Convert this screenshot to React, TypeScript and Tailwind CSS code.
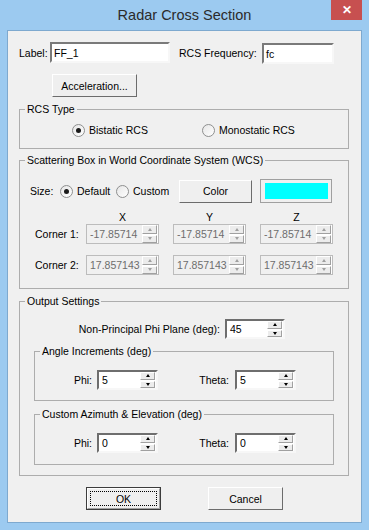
import React from "react";

const font = { fontFamily: '"Liberation Sans", Arial, sans-serif' };

function Arrow({ up, disabled }: { up: boolean; disabled?: boolean }) {
  const color = disabled ? "border-b-[#a0a0a0]" : "border-b-black";
  const colorDown = disabled ? "border-t-[#a0a0a0]" : "border-t-black";
  return up ? (
    <span className={`h-0 w-0 border-x-[2.5px] border-x-transparent border-b-[3px] ${color}`} />
  ) : (
    <span className={`h-0 w-0 border-x-[2.5px] border-x-transparent border-t-[3px] ${colorDown}`} />
  );
}

function Spin({
  value,
  width,
  disabled,
}: {
  value: string;
  width: string;
  disabled?: boolean;
}) {
  return (
    <div
      className={[
        "flex h-[20px] shrink-0",
        width,
        disabled
          ? "border border-[#bcbcbc] bg-[#f0f0f0]"
          : "border-2 border-t-[#6e6e6e] border-l-[#6e6e6e] border-b-[#f7f7f7] border-r-[#f7f7f7] bg-white",
      ].join(" ")}
    >
      <div
        className={[
          "flex min-w-0 flex-1 items-center overflow-hidden whitespace-nowrap",
          disabled ? "pl-[3px] text-[#6d6d6d]" : "pl-[3px] text-black",
        ].join(" ")}
      >
        {value}
      </div>
      <div className="flex w-[16px] shrink-0 flex-col gap-[1px] bg-white pr-[1px]">
        <div className="flex flex-1 items-center justify-center border border-b-[#a0a0a0] border-r-[#a0a0a0] border-t-white border-l-white bg-[#ececec]">
          <Arrow up disabled={disabled} />
        </div>
        <div className="flex flex-1 items-center justify-center border border-b-[#a0a0a0] border-r-[#a0a0a0] border-t-white border-l-white bg-[#ececec]">
          <Arrow up={false} disabled={disabled} />
        </div>
      </div>
    </div>
  );
}

function TextBox({ value, width }: { value: string; width: string }) {
  return (
    <div
      className={`flex h-[21px] items-center border-2 border-t-[#7a7a7a] border-l-[#7a7a7a] border-b-[#f7f7f7] border-r-[#f7f7f7] bg-white pl-[2px] ${width}`}
    >
      {value}
    </div>
  );
}

function Radio({
  checked,
  label,
  width,
}: {
  checked?: boolean;
  label: string;
  width: string;
}) {
  return (
    <div className={`flex shrink-0 items-center ${width}`}>
      <span className="flex h-[13px] w-[13px] shrink-0 items-center justify-center rounded-full border border-[#8e8f8f] bg-gradient-to-br from-[#e6e6e6] to-white">
        {checked && <span className="h-[5px] w-[5px] rounded-full bg-[#1a1a1a]" />}
      </span>
      <span className="ml-[4px] whitespace-nowrap">{label}</span>
    </div>
  );
}

function Button({
  children,
  className,
  focused,
}: {
  children: React.ReactNode;
  className: string;
  focused?: boolean;
}) {
  return (
    <div
      className={[
        "flex shrink-0 items-center justify-center border bg-[#efefef]",
        focused
          ? "border-[#3c3c3c]"
          : "border-t-white border-l-white border-b-[#6c6c6c] border-r-[#6c6c6c]",
        className,
      ].join(" ")}
    >
      {focused ? (
        <div className="flex h-full w-full items-center justify-center border border-b-[#a0a0a0] border-r-[#a0a0a0] border-t-white border-l-white p-[2px]">
          <div className="flex h-full w-full items-center justify-center border border-dotted border-black">
            {children}
          </div>
        </div>
      ) : (
        children
      )}
    </div>
  );
}

function Group({
  title,
  className,
  children,
}: {
  title: string;
  className: string;
  children: React.ReactNode;
}) {
  return (
    <fieldset className={`border border-[#adadad] ${className}`}>
      <legend className="ml-[5px] px-[2px] leading-[14px]">{title}</legend>
      {children}
    </fieldset>
  );
}

export default function App() {
  return (
    <div
      className="flex h-[530px] w-[369px] flex-col bg-[#9ccaf0] leading-[14px] text-black [&_*]:text-[10.5px]"
      style={font}
    >
      <div className="flex h-[30px] shrink-0">
        <div className="flex flex-1 items-center justify-center pl-[38px] pb-[1px] !text-[14.5px] text-[#2b2b2b]">
          Radar Cross Section
        </div>
        <div className="mr-[7px] flex h-[20px] w-[31px] items-center justify-center bg-[#c75050] !text-[12px] font-bold text-white">
          ✕
        </div>
      </div>

      <div className="mx-[7px] flex h-[493px] flex-col border border-[#7ea9cf] bg-[#f0f0f0]">
        <div className="ml-[11px] mt-[11px] flex items-start">
          <span className="mt-[4px] w-[31px]">Label:</span>
          <TextBox value="FF_1" width="w-[120px]" />
          <span className="ml-[9px] mt-[4px] w-[83px]">RCS Frequency:</span>
          <div className="mt-[1px]">
            <TextBox value="fc" width="w-[72px]" />
          </div>
        </div>

        <Button className="ml-[44px] mt-[10px] h-[23px] w-[85px]">Acceleration...</Button>

        <Group title="RCS Type" className="ml-[11px] mt-[5px] w-[330px] pb-[11px]">
          <div className="mt-[7px] flex h-[14px] items-center">
            <div className="ml-[52px]">
              <Radio checked label="Bistatic RCS" width="w-[130px]" />
            </div>
            <Radio label="Monostatic RCS" width="w-[110px]" />
          </div>
        </Group>

        <Group
          title="Scattering Box in World Coordinate System (WCS)"
          className="ml-[11px] mt-[4px] w-[330px] pb-[13px]"
        >
          <div className="mt-[12px] flex h-[24px] items-center">
            <span className="ml-[10px] w-[30px]">Size:</span>
            <Radio checked label="Default" width="w-[56px]" />
            <Radio label="Custom" width="w-[63px]" />
            <Button className="h-[23px] w-[73px]">Color</Button>
            <div className="ml-[8px] flex h-[24px] w-[72px] items-center justify-center border border-[#a0a0a0] bg-[#f0f0f0]">
              <div className="h-[16px] w-[63px] bg-[#00ffff]" />
            </div>
          </div>
          <div className="mt-[7px] flex h-[14px] items-center">
            <span className="ml-[66px] w-[73px] text-center">X</span>
            <span className="ml-[14px] w-[73px] text-center">Y</span>
            <span className="ml-[14px] w-[73px] text-center">Z</span>
          </div>
          <div className="flex h-[20px] items-center">
            <span className="ml-[15px] w-[51px]">Corner 1:</span>
            <Spin value="-17.85714" width="w-[73px]" disabled />
            <div className="ml-[14px]">
              <Spin value="-17.85714" width="w-[73px]" disabled />
            </div>
            <div className="ml-[14px]">
              <Spin value="-17.85714" width="w-[73px]" disabled />
            </div>
          </div>
          <div className="mt-[11px] flex h-[20px] items-center">
            <span className="ml-[15px] w-[51px]">Corner 2:</span>
            <Spin value="17.857143" width="w-[73px]" disabled />
            <div className="ml-[14px]">
              <Spin value="17.857143" width="w-[73px]" disabled />
            </div>
            <div className="ml-[14px]">
              <Spin value="17.857143" width="w-[73px]" disabled />
            </div>
          </div>
        </Group>

        <Group title="Output Settings" className="ml-[11px] mt-[5px] w-[330px] pb-[10px]">
          <div className="mt-[11px] flex h-[20px] items-center">
            <span className="w-[200px] text-right">Non-Principal Phi Plane (deg):</span>
            <div className="ml-[5px]">
              <Spin value="45" width="w-[60px]" />
            </div>
          </div>

          <Group title="Angle Increments (deg)" className="ml-[14px] mt-[5px] w-[300px] pb-[10px]">
            <div className="mt-[12px] flex h-[20px] items-center">
              <span className="w-[57px] text-right">Phi:</span>
              <div className="ml-[5px]">
                <Spin value="5" width="w-[61px]" />
              </div>
              <span className="w-[71px] text-right">Theta:</span>
              <div className="ml-[6px]">
                <Spin value="5" width="w-[61px]" />
              </div>
            </div>
          </Group>

          <Group
            title="Custom Azimuth & Elevation (deg)"
            className="ml-[14px] mt-[6px] w-[300px] pb-[11px]"
          >
            <div className="mt-[12px] flex h-[20px] items-center">
              <span className="w-[57px] text-right">Phi:</span>
              <div className="ml-[5px]">
                <Spin value="0" width="w-[61px]" />
              </div>
              <span className="w-[71px] text-right">Theta:</span>
              <div className="ml-[6px]">
                <Spin value="0" width="w-[61px]" />
              </div>
            </div>
          </Group>
        </Group>

        <div className="mt-[11px] flex">
          <Button focused className="ml-[78px] h-[23px] w-[75px]">
            OK
          </Button>
          <Button className="ml-[47px] h-[23px] w-[75px]">Cancel</Button>
        </div>
      </div>
    </div>
  );
}
